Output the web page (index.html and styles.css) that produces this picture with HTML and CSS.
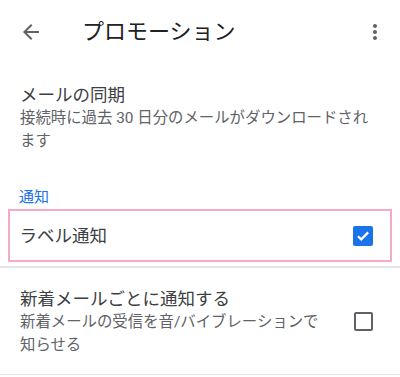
FILE: index.html
```html
<!DOCTYPE html>
<html lang="ja">
<head>
<meta charset="utf-8">
<link rel="stylesheet" href="styles.css">
</head>
<body>
<div class="page">
  <header class="appbar">
    <span class="icon back">
      <svg width="24" height="24" viewBox="0 0 24 24"><path fill="#5f6368" d="M20 11H7.83l5.59-5.59L12 4l-8 8 8 8 1.41-1.41L7.83 13H20v-2z"/></svg>
    </span>
    <span class="title">プロモーション</span>
    <span class="icon more">
      <svg width="24" height="24" viewBox="0 0 24 24"><path fill="#5f6368" d="M12 8c1.1 0 2-.9 2-2s-.9-2-2-2-2 .9-2 2 .9 2 2 2zm0 2c-1.1 0-2 .9-2 2s.9 2 2 2 2-.9 2-2-.9-2-2-2zm0 6c-1.1 0-2 .9-2 2s.9 2 2 2 2-.9 2-2-.9-2-2-2z"/></svg>
    </span>
  </header>

  <section class="sync">
    <div class="item-title">メールの同期</div>
    <div class="item-sub">接続時に過去 30 日分のメールがダウンロードされます</div>
  </section>

  <div class="category">通知</div>

  <div class="row highlighted">
    <div class="row-text">
      <div class="item-title">ラベル通知</div>
    </div>
    <span class="checkbox checked">
      <svg width="20" height="20" viewBox="0 0 20 20"><path d="M5 10.2l3.2 3.2L15.2 6.4" fill="none" stroke="#fff" stroke-width="2.2"/></svg>
    </span>
  </div>
  <div class="divider"></div>

  <div class="row second">
    <div class="row-text">
      <div class="item-title">新着メールごとに通知する</div>
      <div class="item-sub">新着メールの受信を音/バイブレーションで知らせる</div>
    </div>
    <span class="checkbox"></span>
  </div>
  <div class="divider"></div>
</div>
</body>
</html>
```

FILE: styles.css
```css
html, body {
  margin: 0;
  padding: 0;
  background: #ffffff;
}
body {
  font-family: Roboto, "Noto Sans CJK JP", sans-serif;
  color: #3c4043;
}
.page {
  width: 400px;
  height: 377px;
  overflow: hidden;
}
.appbar {
  display: flex;
  align-items: center;
  height: 64px;
}
.icon {
  display: flex;
  width: 24px;
  height: 24px;
}
.back {
  margin-left: 19px;
}
.title {
  margin-left: 39px;
  font-size: 22px;
  line-height: 28px;
  color: #202124;
  flex: 1;
}
.more {
  margin-right: 13px;
}
.sync {
  padding: 19px 20px 0 20px;
}
.sync .item-sub {
  width: 356px;
}
.item-title {
  font-size: 17.5px;
  line-height: 24px;
  color: #3c4043;
}
.item-sub {
  font-size: 15.4px;
  line-height: 23px;
  color: #5f6368;
}
.category {
  margin-top: 34px;
  padding-left: 19px;
  font-size: 15px;
  line-height: 20px;
  color: #1a73e8;
}
.row {
  display: flex;
  align-items: center;
  padding: 0 27px 0 20px;
}
.row-text {
  flex: 1;
}
.highlighted {
  margin: 2px 8px 0 8px;
  border: 2.5px solid #f9a8c9;
  height: 49px;
  padding: 0 17.5px 0 9.5px;
}
.second {
  padding-top: 19px;
  padding-bottom: 17px;
}
.second .item-sub {
  width: 310px;
}
.checkbox {
  display: flex;
  box-sizing: border-box;
  width: 19px;
  height: 19px;
  border: 2px solid #5f6368;
  border-radius: 2px;
}
.checkbox.checked {
  width: 20px;
  height: 20px;
  border: none;
  background: #1a73e8;
}
.divider {
  height: 1.5px;
  background: #e6e6e6;
}
.highlighted + .divider {
  margin-top: 4px;
}
```
